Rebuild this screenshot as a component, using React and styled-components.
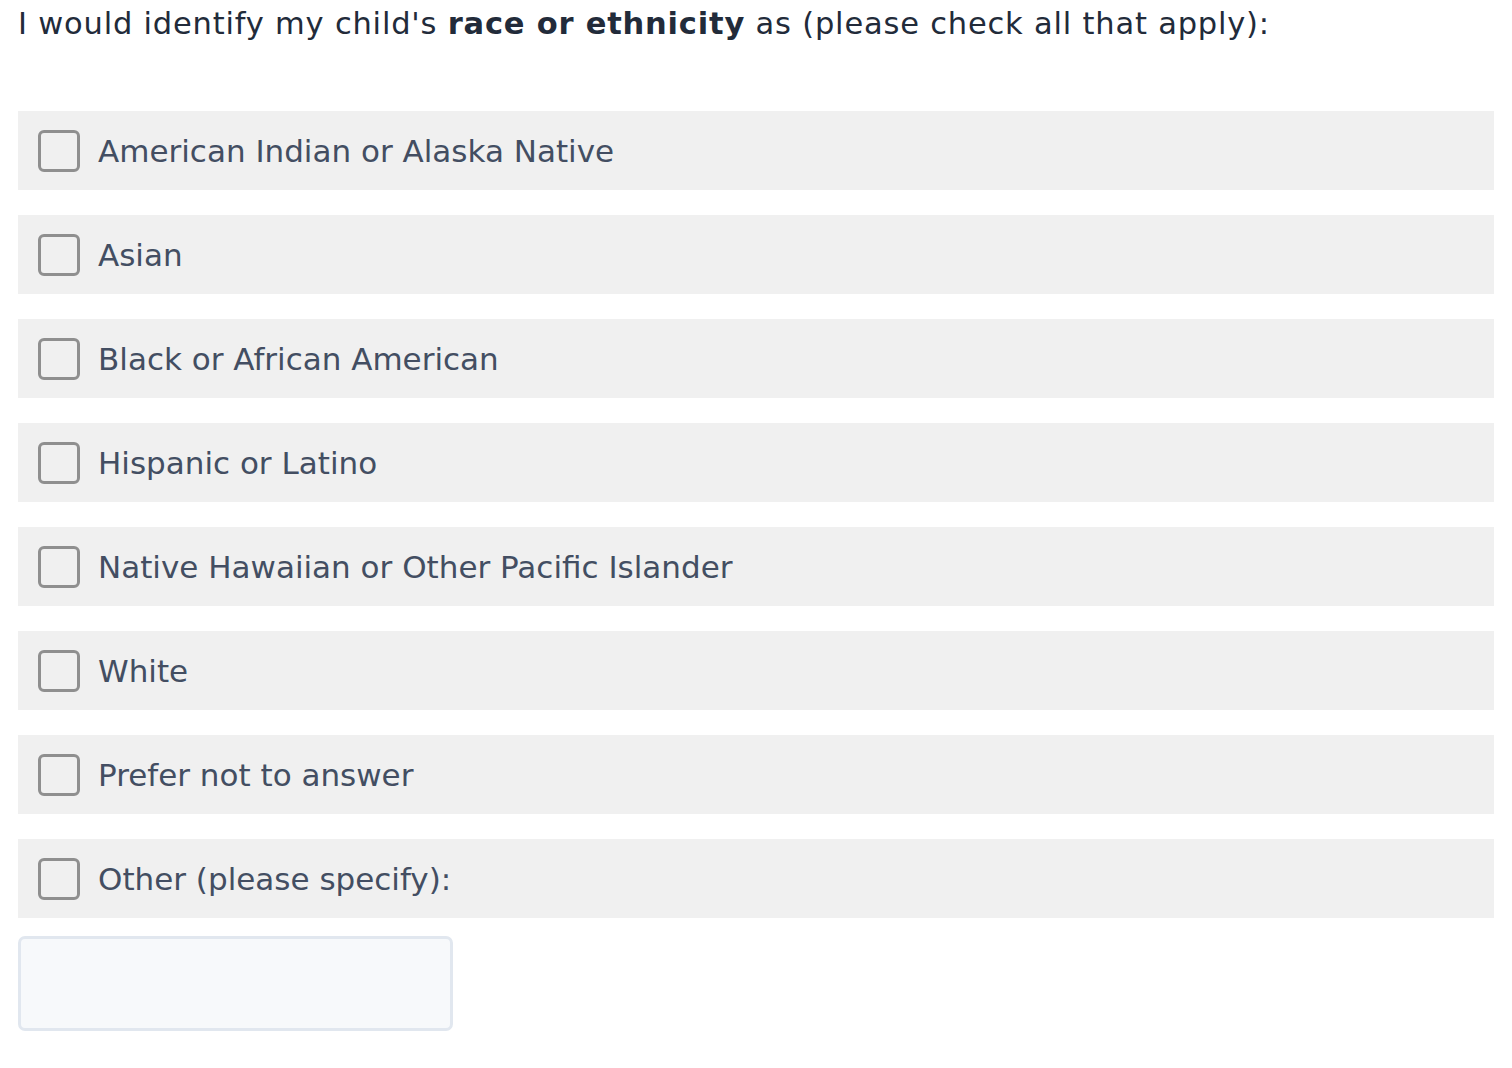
import styled, { createGlobalStyle } from 'styled-components'
import { useState } from 'react'

const GlobalStyle = createGlobalStyle`
  html, body {
    margin: 0;
    padding: 0;
    background: #ffffff;
  }
  body {
    font-family: 'DejaVu Sans', 'Open Sans', sans-serif;
    color: #2d3748;
  }
`

const Page = styled.div`
  padding: 0 18px;
`

const Question = styled.h2`
  margin: 0;
  padding-top: 4px;
  font-size: 30.5px;
  line-height: 40px;
  font-weight: 400;
  letter-spacing: 0.8px;
  color: #222b3a;

  strong {
    font-weight: 700;
  }
`

const OptionList = styled.div`
  display: flex;
  flex-direction: column;
  gap: 25px;
  margin-top: 67px;
`

const Option = styled.label`
  display: flex;
  align-items: center;
  gap: 18px;
  height: 79px;
  padding: 0 20px;
  background: #f0f0f0;
  cursor: pointer;
`

const Box = styled.span`
  flex: none;
  width: 36px;
  height: 36px;
  border: 3px solid #8f8f8f;
  border-radius: 6px;
  background: ${props => (props.checked ? '#8f8f8f' : 'transparent')};
`

const Label = styled.span`
  font-size: 31px;
  font-weight: 400;
  color: #434e62;
  padding-top: 1px;
`

const OtherInput = styled.input`
  display: block;
  box-sizing: border-box;
  width: 435px;
  height: 95px;
  margin-top: 18px;
  border: 3px solid #e1e7ef;
  border-radius: 7px;
  background: #f7f9fb;
  outline: none;
  font: inherit;
  font-size: 24px;
  padding: 0 16px;
`

const OPTIONS = [
  'American Indian or Alaska Native',
  'Asian',
  'Black or African American',
  'Hispanic or Latino',
  'Native Hawaiian or Other Pacific Islander',
  'White',
  'Prefer not to answer',
  'Other (please specify):',
]

export default function App() {
  const [checked, setChecked] = useState({})

  return (
    <Page>
      <GlobalStyle />
      <Question>
        I would identify my child's <strong>race or ethnicity</strong> as (please check all that apply):
      </Question>
      <OptionList>
        {OPTIONS.map(option => (
          <Option key={option} onClick={() => setChecked({ ...checked, [option]: !checked[option] })}>
            <Box checked={checked[option]} />
            <Label>{option}</Label>
          </Option>
        ))}
      </OptionList>
      <OtherInput type="text" />
    </Page>
  )
}
